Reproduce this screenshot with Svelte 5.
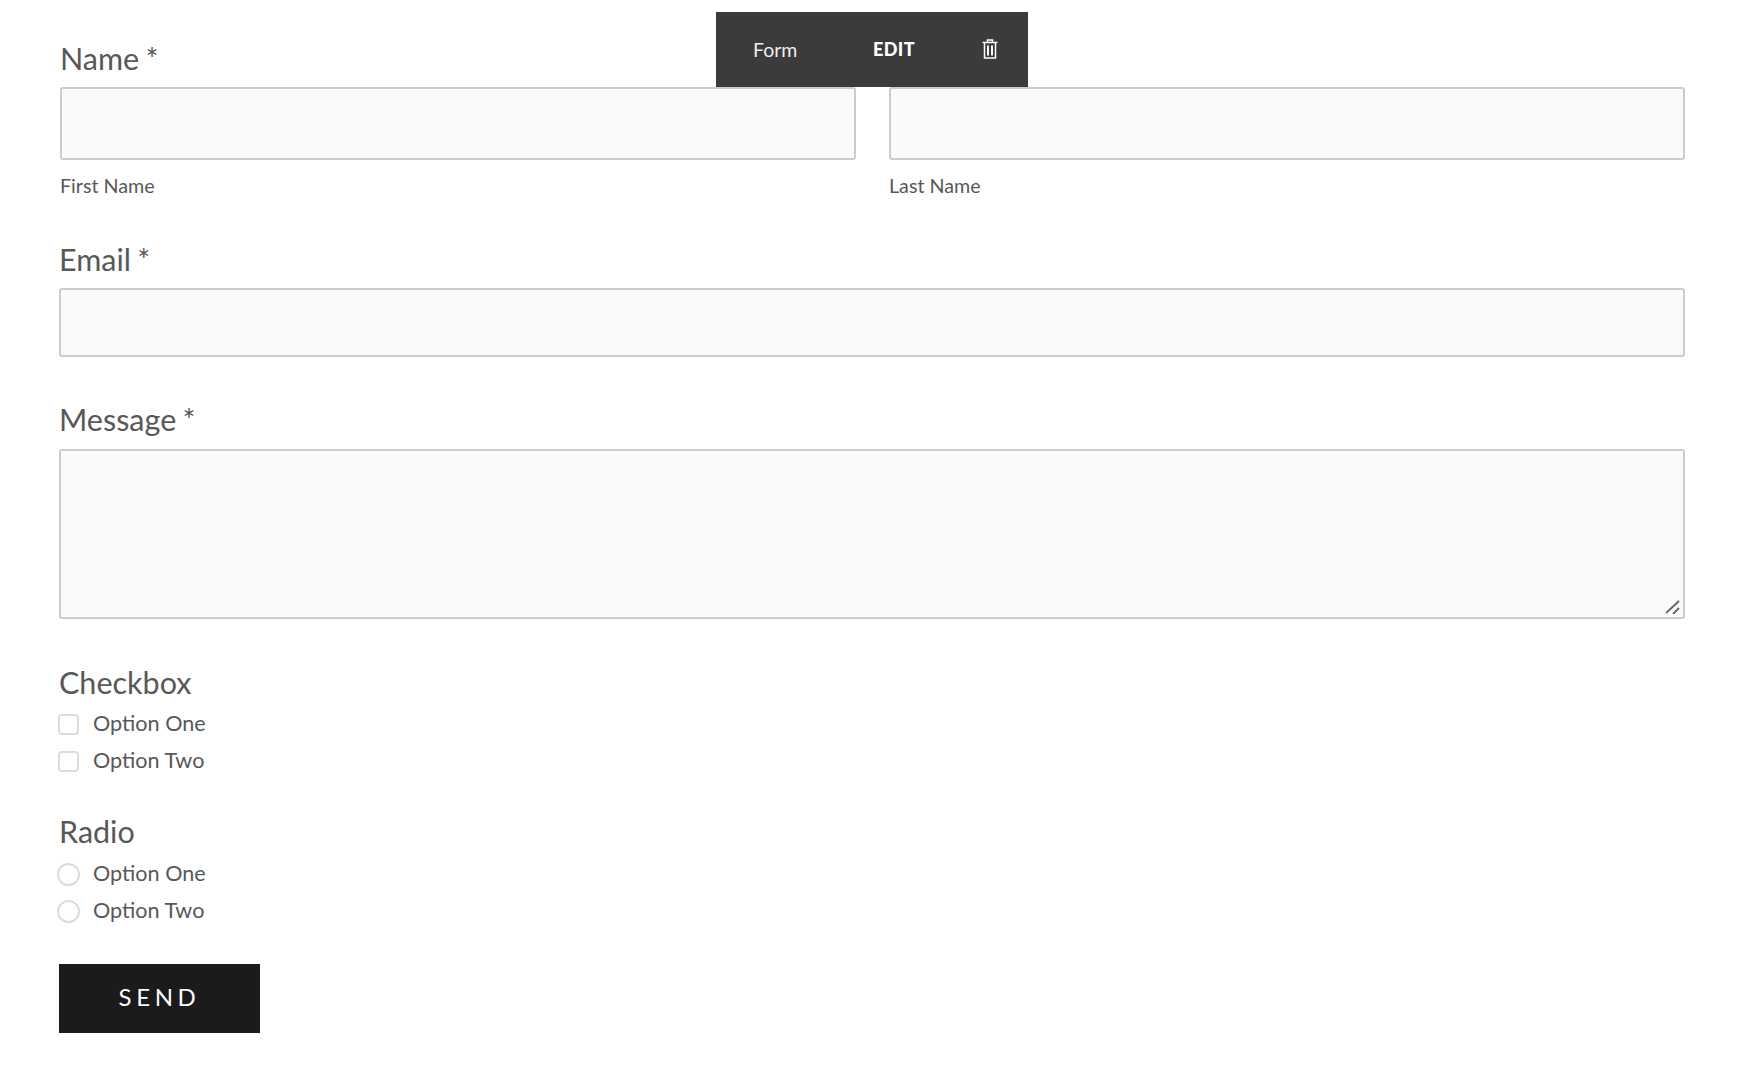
<script lang="ts">
    const checks: string[] = ["Option One", "Option Two"];
    const radios: string[] = ["Option One", "Option Two"];
</script>

<div class="toolbar">
    <span class="block-name">Form</span>
    <span class="edit">EDIT</span>
    <svg class="trash" viewBox="0 0 16 20" width="16" height="20" fill="none" stroke="#fff" stroke-width="1.5">
        <path d="M0.5 3.5h15M5.5 3.5v-2.5h5v2.5" />
        <path d="M2.5 3.5v15.5h11v-15.5" />
        <path d="M6 6.5v10M10 6.5v10" stroke-width="2" />
    </svg>
</div>

<form class="form">
    <div class="label first">Name *</div>
    <div class="name-row">
        <div class="name-col">
            <input class="field name-input" type="text" />
            <div class="sublabel">First Name</div>
        </div>
        <div class="name-col">
            <input class="field name-input" type="text" />
            <div class="sublabel">Last Name</div>
        </div>
    </div>

    <div class="label email-label">Email *</div>
    <input class="field email-input" type="email" />

    <div class="label message-label">Message *</div>
    <div class="message-wrap">
        <textarea class="field message-input"></textarea>
        <svg class="grip" viewBox="0 0 14 14" width="14" height="14" stroke="#666" stroke-width="2">
            <path d="M0 13L13 1M7 14L13 8" />
        </svg>
    </div>

    <div class="label check-label">Checkbox</div>
    <div class="options">
        {#each checks as opt}
            <label class="option">
                <input type="checkbox" />
                <span>{opt}</span>
            </label>
        {/each}
    </div>

    <div class="label radio-label">Radio</div>
    <div class="options">
        {#each radios as opt}
            <label class="option">
                <input type="radio" name="radio" />
                <span>{opt}</span>
            </label>
        {/each}
    </div>

    <button class="send" type="button">SEND</button>
</form>

<style>
    :global(body) {
        background: #fff;
        font-family: "Lato", "Open Sans", sans-serif;
        color: #555;
    }

    .form {
        display: flex;
        flex-direction: column;
        align-items: flex-start;
        padding: 42px 57px 47px 59px;
    }

    .toolbar {
        position: absolute;
        left: 716px;
        top: 12px;
        width: 312px;
        height: 75px;
        box-sizing: border-box;
        background: #3b3b3b;
        color: #fff;
        display: flex;
        align-items: center;
        padding-left: 37px;
        padding-bottom: 1px;
        font-family: "Lato", sans-serif;
        font-size: 19.5px;
    }

    .block-name {
        color: #eee;
        width: 120px;
    }

    .edit {
        font-weight: 900;
        font-size: 18px;
        letter-spacing: 0.4px;
        width: 109px;
    }

    .trash {
        display: block;
    }

    .label {
        font-size: 30.5px;
        line-height: 32px;
        word-spacing: -1.5px;
        color: #585858;
    }

    .first {
        margin-left: 1px;
        margin-bottom: 13px;
    }

    .name-row {
        display: grid;
        grid-template-columns: 796px 796px;
        gap: 33px;
        width: 100%;
        padding-left: 1px;
        box-sizing: border-box;
    }

    .field {
        display: block;
        width: 100%;
        box-sizing: border-box;
        background: #fafafa;
        border: 2px solid #ccc;
        border-radius: 3px;
        margin: 0;
        outline: none;
    }

    .name-input {
        height: 73px;
    }

    .sublabel {
        margin-top: 14px;
        font-size: 19.7px;
        line-height: 24px;
        color: #585858;
    }

    .email-label {
        margin-top: 45px;
        margin-bottom: 13px;
    }

    .email-input {
        height: 69px;
    }

    .message-label {
        margin-top: 46px;
        margin-bottom: 14px;
    }

    .message-wrap {
        position: relative;
        width: 100%;
    }

    .message-input {
        height: 170px;
        resize: none;
    }

    .grip {
        position: absolute;
        right: 5px;
        bottom: 5px;
    }

    .check-label {
        margin-top: 47px;
        margin-bottom: 6px;
    }

    .radio-label {
        margin-top: 37px;
        margin-bottom: 7px;
    }

    .options {
        display: flex;
        flex-direction: column;
    }

    .option {
        display: flex;
        align-items: center;
        height: 37px;
        font-size: 21.6px;
        color: #585858;
    }

    .option input {
        appearance: none;
        box-sizing: border-box;
        margin: 4px 14px 0 -1px;
        width: 21px;
        height: 21px;
        background: #fff;
        border: 2px solid #dcdcdc;
        border-radius: 4px;
    }

    .option input[type="radio"] {
        width: 23px;
        height: 23px;
        margin-left: -2px;
        margin-right: 13px;
        border-radius: 50%;
    }

    .send {
        margin-top: 36px;
        width: 201px;
        height: 69px;
        padding: 0 0 4px;
        border: none;
        border-radius: 0;
        background: #1b1b1b;
        color: #fff;
        font-family: "Lato", sans-serif;
        font-size: 24px;
        letter-spacing: 4.6px;
    }
</style>
